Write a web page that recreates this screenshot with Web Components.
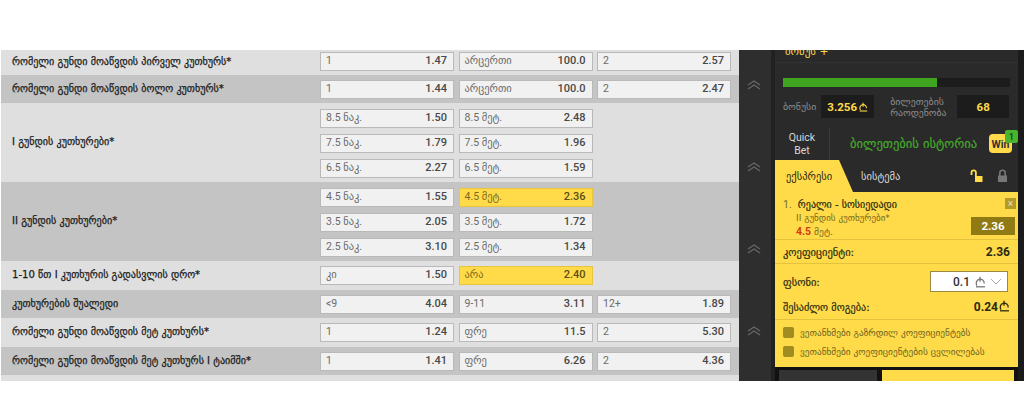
<!DOCTYPE html>
<html lang="ka">
<head>
<meta charset="utf-8">
<title>კუთხურები</title>
<style>
    html, body { margin: 0; background: #fff; }
    body { font-family: Roboto, "DejaVu Sans", sans-serif; padding-top: 50px; }
</style>
</head>
<body>
<bet-page>
    <market-table>
        <odds-row label="რომელი გუნდი მოაწვდის პირველ კუთხურს*" style="height:25px;--top:2px">
            <odds-btn name="1" odd="1.47"></odds-btn><odds-btn name="არცერთი" odd="100.0"></odds-btn><odds-btn name="2" odd="2.57"></odds-btn>
        </odds-row>
        <odds-row dark label="რომელი გუნდი მოაწვდის ბოლო კუთხურს*" style="height:28px;--top:5px">
            <odds-btn name="1" odd="1.44"></odds-btn><odds-btn name="არცერთი" odd="100.0"></odds-btn><odds-btn name="2" odd="2.47"></odds-btn>
        </odds-row>
        <odds-row label="I გუნდის კუთხურები*" style="height:79px;--top:6px">
            <odds-btn name="8.5 ნაკ." odd="1.50"></odds-btn><odds-btn name="8.5 მეტ." odd="2.48"></odds-btn><span></span>
            <odds-btn name="7.5 ნაკ." odd="1.79"></odds-btn><odds-btn name="7.5 მეტ." odd="1.96"></odds-btn><span></span>
            <odds-btn name="6.5 ნაკ." odd="2.27"></odds-btn><odds-btn name="6.5 მეტ." odd="1.59"></odds-btn><span></span>
        </odds-row>
        <odds-row dark label="II გუნდის კუთხურები*" style="height:79px;--top:6px">
            <odds-btn name="4.5 ნაკ." odd="1.55"></odds-btn><odds-btn active name="4.5 მეტ." odd="2.36"></odds-btn><span></span>
            <odds-btn name="3.5 ნაკ." odd="2.05"></odds-btn><odds-btn name="3.5 მეტ." odd="1.72"></odds-btn><span></span>
            <odds-btn name="2.5 ნაკ." odd="3.10"></odds-btn><odds-btn name="2.5 მეტ." odd="1.34"></odds-btn><span></span>
        </odds-row>
        <odds-row label="1-10 წთ I კუთხურის გადასვლის დრო*" style="height:29px;--top:5px">
            <odds-btn name="კი" odd="1.50"></odds-btn><odds-btn active name="არა" odd="2.40"></odds-btn><span></span>
        </odds-row>
        <odds-row dark label="კუთხურების შუალედი" style="height:28px;--top:5px">
            <odds-btn name="&lt;9" odd="4.04"></odds-btn><odds-btn name="9-11" odd="3.11"></odds-btn><odds-btn name="12+" odd="1.89"></odds-btn>
        </odds-row>
        <odds-row label="რომელი გუნდი მოაწვდის მეტ კუთხურს*" style="height:29px;--top:5px">
            <odds-btn name="1" odd="1.24"></odds-btn><odds-btn name="ფრე" odd="11.5"></odds-btn><odds-btn name="2" odd="5.30"></odds-btn>
        </odds-row>
        <odds-row dark label="რომელი გუნდი მოაწვდის მეტ კუთხურს I ტაიმში*" style="height:28px;--top:5px">
            <odds-btn name="1" odd="1.41"></odds-btn><odds-btn name="ფრე" odd="6.26"></odds-btn><odds-btn name="2" odd="4.36"></odds-btn>
        </odds-row>
        <odds-row style="height:6px"></odds-row>
    </market-table>
    <scroll-rail></scroll-rail>
    <bet-sidebar>
        <bonus-box></bonus-box>
        <quick-bar></quick-bar>
        <bet-slip></bet-slip>
    </bet-sidebar>
</bet-page>

<script>
const lari = (size, color) => `<svg width="${size}" height="${size}" viewBox="0 0 12 12" fill="none" stroke="${color}" stroke-width="1.3" style="vertical-align:-1px"><path d="M3 9.600A4 4 0 1 1 10.200 7.500"/><path d="M6 .8v5"/><path d="M2 10.800h9"/></svg>`;

class BetPage extends HTMLElement {
    constructor() {
        super();
        this.attachShadow({ mode: 'open' });
        this.shadowRoot.innerHTML = `
            <style>
                :host {
                    display: grid;
                    grid-template-columns: 739px 36px 249px;
                    height: 331px;
                    overflow: hidden;
                    background: #2a2a2a;
                }
            </style>
            <slot></slot>
        `;
    }
}

class MarketTable extends HTMLElement {
    constructor() {
        super();
        this.attachShadow({ mode: 'open' });
        this.shadowRoot.innerHTML = `
            <style>
                :host {
                    display: block;
                    background: #fff;
                    padding-left: 1px;
                }
            </style>
            <slot></slot>
        `;
    }
}

class OddsRow extends HTMLElement {
    constructor() {
        super();
        this.attachShadow({ mode: 'open' });
        this.shadowRoot.innerHTML = `
            <style>
                :host {
                    display: grid;
                    grid-template-columns: 319px 1fr;
                    background: #dfdfdf;
                    box-sizing: border-box;
                    overflow: hidden;
                }
                :host([dark]) { background: #c4c4c4; }
                .label {
                    display: flex;
                    align-items: center;
                    padding-left: 11px;
                    padding-bottom: 2px;
                    font: 400 10.1px "DejaVu Sans", sans-serif;
                    -webkit-text-stroke: 0.25px #1c1c1c;
                    color: #1c1c1c;
                    white-space: nowrap;
                }
                .odds {
                    display: grid;
                    grid-template-columns: repeat(3, 134px);
                    column-gap: 4.5px;
                    row-gap: 6.5px;
                    align-content: start;
                    padding-top: var(--top, 5px);
                }
            </style>
            <div class="label"></div>
            <div class="odds"><slot></slot></div>
        `;
    }

    connectedCallback() {
        this.shadowRoot.querySelector('.label').textContent = this.getAttribute('label') || '';
    }
}

class OddsBtn extends HTMLElement {
    constructor() {
        super();
        this.attachShadow({ mode: 'open' });
        this.shadowRoot.innerHTML = `
            <style>
                :host {
                    display: flex;
                    align-items: center;
                    justify-content: space-between;
                    box-sizing: border-box;
                    height: 18.5px;
                    padding: 0 6px 1px 5px;
                    background: #f1f1f1;
                    border: 1px solid #b9b9b9;
                    font: 400 10.5px Roboto, "DejaVu Sans", sans-serif;
                    color: #6a6a6a;
                }
                :host([active]) {
                    background: #ffdb4a;
                    border-color: #e9c53f;
                    color: #7d6a1d;
                }
                .odd {
                    font-weight: 500;
                    font-size: 11px;
                    color: #484848;
                }
                :host([active]) .odd { color: #5a4f14; }
            </style>
            <span class="name"></span>
            <span class="odd"></span>
        `;
    }

    connectedCallback() {
        this.shadowRoot.querySelector('.name').textContent = this.getAttribute('name');
        this.shadowRoot.querySelector('.odd').textContent = this.getAttribute('odd');
    }
}

class ScrollRail extends HTMLElement {
    constructor() {
        super();
        this.attachShadow({ mode: 'open' });
        const chevron = `<svg width="14" height="10" viewBox="0 0 14 10" fill="none" stroke="#666" stroke-width="1.4"><path d="M1 5l6-4 6 4"/><path d="M1 9l6-4 6 4"/></svg>`;
        this.shadowRoot.innerHTML = `
            <style>
                :host {
                    display: flex;
                    flex-direction: column;
                    align-items: center;
                    gap: 72px;
                    padding-top: 30px;
                    padding-right: 3px;
                    background: #2e2e2e;
                    border-right: 4px solid #212121;
                    box-sizing: border-box;
                }
                svg { display: block; }
            </style>
            ${chevron}${chevron}${chevron}${chevron}
        `;
    }
}

class BetSidebar extends HTMLElement {
    constructor() {
        super();
        this.attachShadow({ mode: 'open' });
        this.shadowRoot.innerHTML = `
            <style>
                :host {
                    display: flex;
                    flex-direction: column;
                    background: #1b1b1b;
                    width: 249px;
                    height: 331px;
                    overflow: hidden;
                }
            </style>
            <slot></slot>
        `;
    }
}

class BonusBox extends HTMLElement {
    constructor() {
        super();
        this.attachShadow({ mode: 'open' });
        this.shadowRoot.innerHTML = `
            <style>
                :host {
                    display: block;
                    box-sizing: border-box;
                    height: 77px;
                    width: 243px;
                    background: #2a2a2a;
                    padding: 0 8px;
                    font-family: "DejaVu Sans", sans-serif;
                    position: relative;
                    overflow: hidden;
                }
                .title {
                    margin-top: -4px;
                    height: 16px;
                    padding-left: 10px;
                    font-size: 10.8px;
                    line-height: 12px;
                    color: #ffdb4a;
                    border-bottom: 1px solid #333;
                    margin-left: -8px;
                    margin-right: -8px;
                }
                .bar {
                    margin-top: 15px;
                    height: 9px;
                    background: #1c1c1c;
                }
                .fill {
                    width: 154px;
                    height: 9px;
                    background: #3fa41f;
                }
                .stats {
                    display: flex;
                    align-items: center;
                    margin-top: 8px;
                    height: 23px;
                    font-size: 9.8px;
                    color: #8c8c8c;
                }
                .val {
                    display: flex;
                    align-items: center;
                    justify-content: center;
                    gap: 1px;
                    height: 23px;
                    background: #1c1c1c;
                    color: #ffdb4a;
                    font: 700 11.5px Roboto, sans-serif;
                }
                .a { width: 53px; margin-left: 5px; }
                .b { width: 52px; margin-left: 8px; }
                .two { margin-left: 16px; width: 59px; line-height: 11px; font-size: 9.8px; white-space: nowrap; }
            </style>
            <div class="title">ბონუს +</div>
            <div class="bar"><div class="fill"></div></div>
            <div class="stats">
                <span>ბონუსი</span>
                <span class="val a">3.256${lari(10, '#ffdb4a')}</span>
                <span class="two">ბილეთების<br>რაოდენობა</span>
                <span class="val b">68</span>
            </div>
        `;
    }
}

class QuickBar extends HTMLElement {
    constructor() {
        super();
        this.attachShadow({ mode: 'open' });
        this.shadowRoot.innerHTML = `
            <style>
                :host {
                    display: flex;
                    align-items: center;
                    box-sizing: border-box;
                    height: 33px;
                    width: 243px;
                    background: #2a2a2a;
                    position: relative;
                }
                .quick {
                    width: 55px;
                    height: 33px;
                    display: flex;
                    align-items: center;
                    justify-content: center;
                    text-align: center;
                    font: 400 10.5px/13px Roboto, sans-serif;
                    color: #d8d8d8;
                    border-right: 1px solid #3a3a3a;
                    box-sizing: border-box;
                }
                .history {
                    margin-left: 20px;
                    font: 400 12.6px "DejaVu Sans", sans-serif;
                    -webkit-text-stroke: 0.2px #45a82a;
                    color: #45a82a;
                    white-space: nowrap;
                }
                .win {
                    position: absolute;
                    left: 214px;
                    top: 7px;
                    width: 23px;
                    height: 19px;
                    background: #ffdb4a;
                    border-radius: 4px;
                    color: #333;
                    font: 700 10.5px/21px Roboto, sans-serif;
                    text-align: center;
                }
                .count {
                    position: absolute;
                    left: 230px;
                    top: 3px;
                    width: 13px;
                    height: 13px;
                    background: #49b52c;
                    border-radius: 2px;
                    color: #143;
                    font: 500 9.5px/13px Roboto, sans-serif;
                    text-align: center;
                }
            </style>
            <div class="quick">Quick<br>Bet</div>
            <div class="history">ბილეთების ისტორია</div>
            <div class="win">Win</div>
            <div class="count">1</div>
        `;
    }
}

class BetSlip extends HTMLElement {
    constructor() {
        super();
        this.attachShadow({ mode: 'open' });
        this.shadowRoot.innerHTML = `
            <style>
                :host {
                    display: block;
                    width: 243px;
                    font-family: "DejaVu Sans", sans-serif;
                    color: #2c2a10;
                    font-size: 10.5px;
                }
                .tabs {
                    display: flex;
                    align-items: center;
                    height: 32px;
                    background: #2a2a2a;
                    position: relative;
                }
                .tab {
                    box-sizing: border-box;
                    height: 32px;
                    width: 78px;
                    line-height: 32px;
                    padding-left: 11px;
                    background: #ffdb4a;
                    clip-path: polygon(0 0, 64px 0, 78px 100%, 0 100%);
                    white-space: nowrap;
                }
                .other { margin-left: 8px; color: #ddd; }
                .locks { margin-left: auto; display: flex; gap: 13px; padding-right: 10px; align-items: center; }
                .body { background: #ffdb4a; height: 175px; }
                .entry {
                    box-sizing: border-box;
                    height: 48px;
                    padding: 6px 8px 0;
                    border-bottom: 1px solid #e3c23d;
                    position: relative;
                }
                .team { font-size: 10px; -webkit-text-stroke: 0.2px #2c2a10; white-space: nowrap; }
                .team b { font: 400 10.5px Roboto, sans-serif; color: #776a1e; -webkit-text-stroke: 0; margin-right: 3px; }
                .sub { padding-left: 13px; font-size: 9px; color: #776a1e; margin-top: 2px; }
                .sel { padding-left: 13px; font-size: 9.5px; color: #776a1e; margin-top: 2px; }
                .sel b { color: #d33b12; font-family: Roboto, sans-serif; font-weight: 700; font-size: 10.5px; }
                .close {
                    position: absolute;
                    top: 6px;
                    right: 2px;
                    width: 11px;
                    height: 11px;
                    background: #b09a2a;
                    color: #f3ddb0;
                    font: 400 10px/11px Roboto, sans-serif;
                    text-align: center;
                }
                .entry-odd {
                    position: absolute;
                    top: 25px;
                    right: 3px;
                    width: 44px;
                    height: 18px;
                    background: #8f7a14;
                    color: #fff;
                    font: 700 11.5px/18px Roboto, sans-serif;
                    text-align: center;
                }
                .line {
                    display: flex;
                    align-items: center;
                    justify-content: space-between;
                    padding: 0 8px;
                    white-space: nowrap;
                }
                .line > span { -webkit-text-stroke: 0.2px #2c2a10; }
                .line b { font: 700 12px Roboto, sans-serif; color: #2c2a10; }
                .coef { height: 23px; border-bottom: 1px solid #e3c23d; }
                .stake { height: 31px; padding-right: 10px; padding-top: 4px; box-sizing: border-box; }
                .input {
                    box-sizing: border-box;
                    display: flex;
                    align-items: center;
                    justify-content: flex-end;
                    gap: 4px;
                    width: 78px;
                    height: 21px;
                    padding-right: 5px;
                    background: #fff;
                    border: 1px solid #9a8a40;
                    font: 500 12px Roboto, sans-serif;
                    color: #333;
                }
                .win { height: 24px; padding-top: 0; border-bottom: 1px solid #e3c23d; }
                .win > span { font-size: 10.2px; }
                .checks { padding: 3px 8px 0; font-size: 9.3px; color: #6e6320; }
                .check { display: flex; align-items: center; gap: 6px; height: 19px; white-space: nowrap; }
                .box { width: 11px; height: 11px; border-radius: 2px; background: #a08c20; flex: none; }
                .foot {
                    display: flex;
                    gap: 5px;
                    height: 14px;
                    padding: 3px 4px 0;
                    background: #111;
                    box-sizing: border-box;
                    width: 243px;
                }
                .foot div { background: #333; width: 98px; }
                .foot div + div { background: #ffdb4a; width: 132px; }
            </style>
            <div class="tabs">
                <div class="tab">ექსპრესი</div>
                <div class="other">სისტემა</div>
                <div class="locks">
                    <svg width="14" height="14" viewBox="0 0 14 14" fill="none" stroke="#ffdb4a" stroke-width="1.8"><path d="M1.5 6V3.5a2.200 2.200 0 0 1 4.400 0V7"/><rect x="5" y="7" width="7.500" height="6" fill="#ffdb4a" stroke="none"/></svg>
                    <svg width="11" height="14" viewBox="0 0 11 14" fill="none" stroke="#777" stroke-width="1.6"><path d="M2.800 7V4a2.700 2.700 0 0 1 5.400 0v3"/><rect x="1" y="6.500" width="9" height="6.500" fill="#777" stroke="none"/></svg>
                </div>
            </div>
            <div class="body">
                <div class="entry">
                    <div class="team"><b>1.</b> რეალი - სოსიედადი</div>
                    <div class="sub">II გუნდის კუთხურები*</div>
                    <div class="sel"><b>4.5</b> მეტ.</div>
                    <div class="close">×</div>
                    <div class="entry-odd">2.36</div>
                </div>
                <div class="line coef"><span>კოეფიციენტი:</span><b>2.36</b></div>
                <div class="line stake"><span>ფსონი:</span><div class="input">0.1 ${lari(12, '#777')}<svg width="12" height="7" viewBox="0 0 12 7" fill="none" stroke="#aaa"><path d="M1 1l5 5 5-5"/></svg></div></div>
                <div class="line win"><span>შესაძლო მოგება:</span><b>0.24${lari(12, '#2c2a10')}</b></div>
                <div class="checks">
                    <div class="check"><span class="box"></span>ვეთანხმები გაზრდილ კოეფიციენტებს</div>
                    <div class="check"><span class="box"></span>ვეთანხმები კოეფიციენტების ცვლილებას</div>
                </div>
            </div>
            <div class="foot"><div></div><div></div></div>
        `;
    }
}

customElements.define('bet-page', BetPage);
customElements.define('market-table', MarketTable);
customElements.define('odds-row', OddsRow);
customElements.define('odds-btn', OddsBtn);
customElements.define('scroll-rail', ScrollRail);
customElements.define('bet-sidebar', BetSidebar);
customElements.define('bonus-box', BonusBox);
customElements.define('quick-bar', QuickBar);
customElements.define('bet-slip', BetSlip);
</script>
</body>
</html>
